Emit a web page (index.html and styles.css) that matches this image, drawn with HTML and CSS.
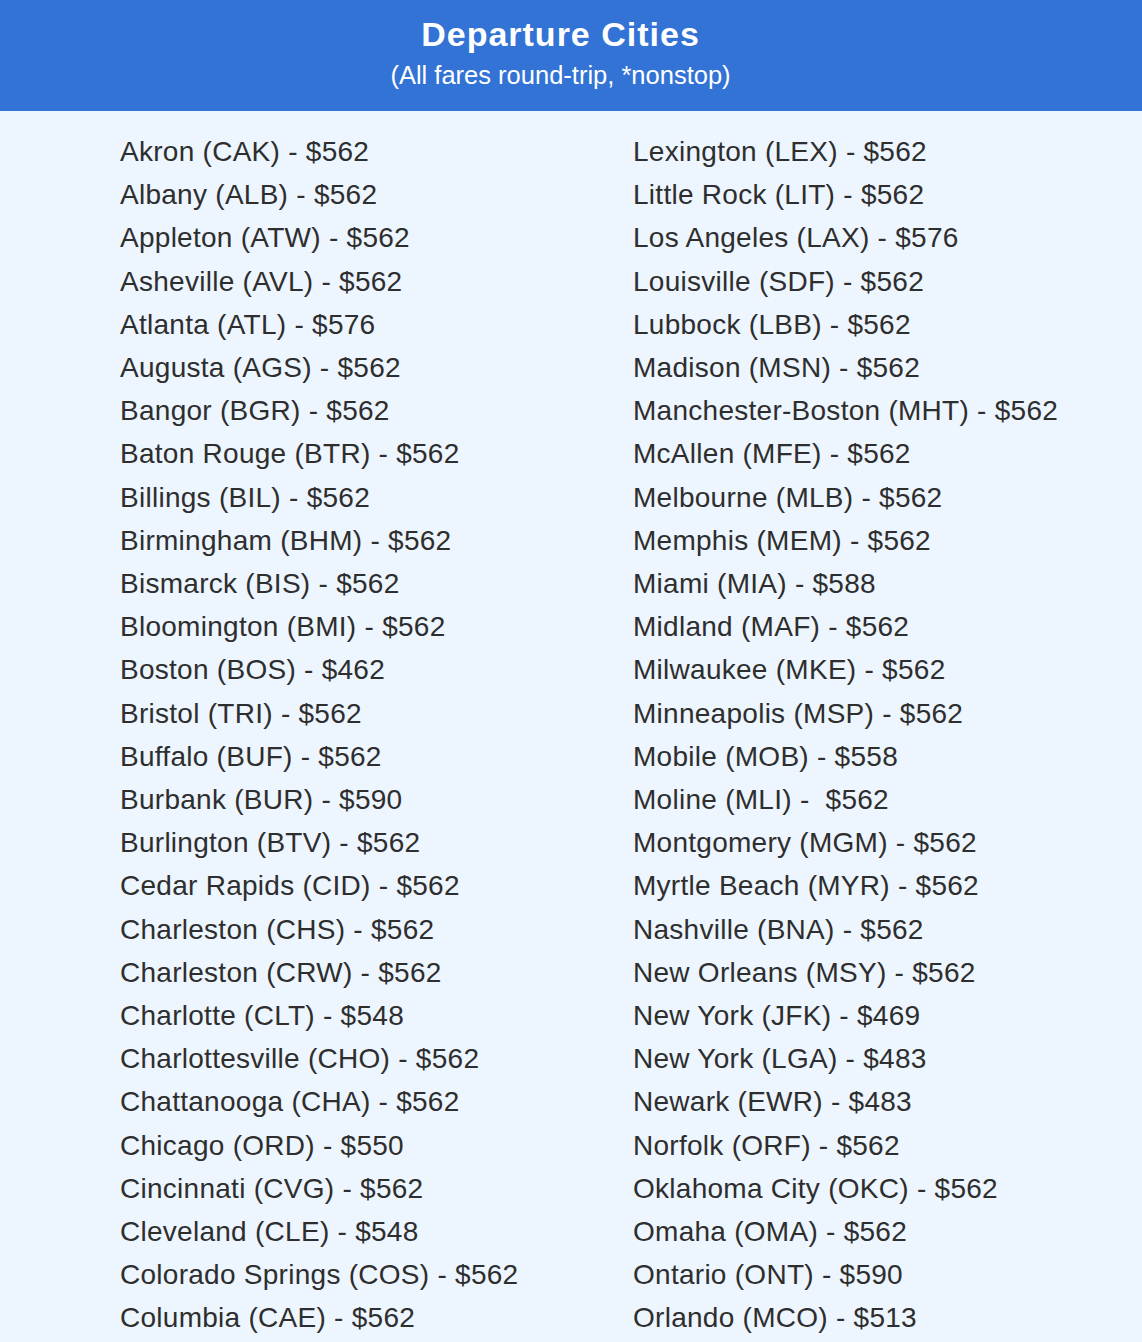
FILE: index.html
```html
<!DOCTYPE html>
<html lang="en">
<head>
<meta charset="utf-8">
<title>Departure Cities</title>
<link rel="stylesheet" href="styles.css">
</head>
<body>
<header class="banner">
  <h1 class="banner-title">Departure Cities</h1>
  <p class="banner-sub">(All fares round-trip, *nonstop)</p>
</header>
<main class="cities">
  <ul class="city-col">
    <li>Akron (CAK) - $562</li>
    <li>Albany (ALB) - $562</li>
    <li>Appleton (ATW) - $562</li>
    <li>Asheville (AVL) - $562</li>
    <li>Atlanta (ATL) - $576</li>
    <li>Augusta (AGS) - $562</li>
    <li>Bangor (BGR) - $562</li>
    <li>Baton Rouge (BTR) - $562</li>
    <li>Billings (BIL) - $562</li>
    <li>Birmingham (BHM) - $562</li>
    <li>Bismarck (BIS) - $562</li>
    <li>Bloomington (BMI) - $562</li>
    <li>Boston (BOS) - $462</li>
    <li>Bristol (TRI) - $562</li>
    <li>Buffalo (BUF) - $562</li>
    <li>Burbank (BUR) - $590</li>
    <li>Burlington (BTV) - $562</li>
    <li>Cedar Rapids (CID) - $562</li>
    <li>Charleston (CHS) - $562</li>
    <li>Charleston (CRW) - $562</li>
    <li>Charlotte (CLT) - $548</li>
    <li>Charlottesville (CHO) - $562</li>
    <li>Chattanooga (CHA) - $562</li>
    <li>Chicago (ORD) - $550</li>
    <li>Cincinnati (CVG) - $562</li>
    <li>Cleveland (CLE) - $548</li>
    <li>Colorado Springs (COS) - $562</li>
    <li>Columbia (CAE) - $562</li>
  </ul>
  <ul class="city-col">
    <li>Lexington (LEX) - $562</li>
    <li>Little Rock (LIT) - $562</li>
    <li>Los Angeles (LAX) - $576</li>
    <li>Louisville (SDF) - $562</li>
    <li>Lubbock (LBB) - $562</li>
    <li>Madison (MSN) - $562</li>
    <li>Manchester-Boston (MHT) - $562</li>
    <li>McAllen (MFE) - $562</li>
    <li>Melbourne (MLB) - $562</li>
    <li>Memphis (MEM) - $562</li>
    <li>Miami (MIA) - $588</li>
    <li>Midland (MAF) - $562</li>
    <li>Milwaukee (MKE) - $562</li>
    <li>Minneapolis (MSP) - $562</li>
    <li>Mobile (MOB) - $558</li>
    <li>Moline (MLI) - &nbsp;$562</li>
    <li>Montgomery (MGM) - $562</li>
    <li>Myrtle Beach (MYR) - $562</li>
    <li>Nashville (BNA) - $562</li>
    <li>New Orleans (MSY) - $562</li>
    <li>New York (JFK) - $469</li>
    <li>New York (LGA) - $483</li>
    <li>Newark (EWR) - $483</li>
    <li>Norfolk (ORF) - $562</li>
    <li>Oklahoma City (OKC) - $562</li>
    <li>Omaha (OMA) - $562</li>
    <li>Ontario (ONT) - $590</li>
    <li>Orlando (MCO) - $513</li>
  </ul>
</main>
</body>
</html>
```

FILE: styles.css
```css
html, body {
  margin: 0;
  padding: 0;
}
body {
  background: #edf5fe;
  font-family: "Liberation Sans", Arial, Helvetica, sans-serif;
  color: #2e2e2e;
}
.banner {
  background: #3273d5;
  color: #ffffff;
  text-align: center;
  height: 111px;
  box-sizing: border-box;
  padding: 14px 21px 0 0;
}
.banner-title {
  margin: 0;
  font-size: 34px;
  font-weight: 700;
  letter-spacing: 1px;
  line-height: 40px;
}
.banner-sub {
  margin: 6px 0 0;
  font-size: 25.5px;
  line-height: 30px;
}
.cities {
  display: grid;
  grid-template-columns: 513px 1fr;
  padding: 19px 0 40px 120px;
}
.city-col {
  list-style: none;
  margin: 0;
  padding: 0;
}
.city-col li {
  font-size: 28px;
  letter-spacing: 0.27px;
  line-height: 43.2px;
  white-space: nowrap;
}
```
